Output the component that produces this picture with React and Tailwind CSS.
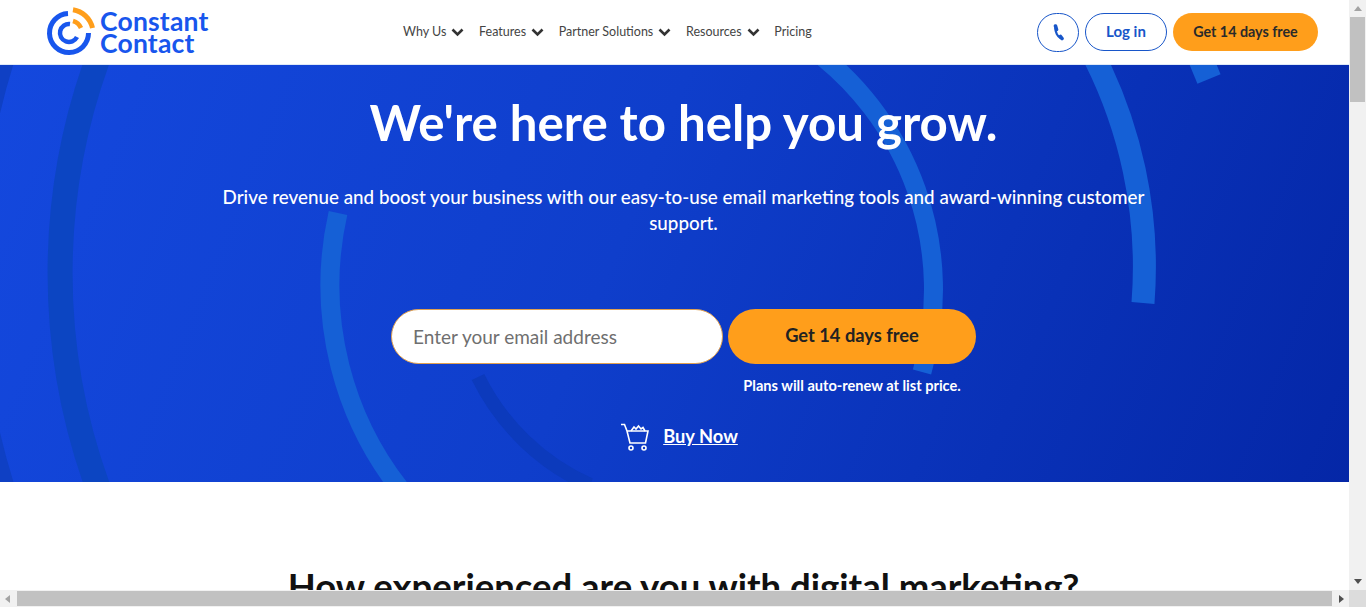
import React from 'react';

const FONT = "font-['Lato','Noto_Sans',sans-serif]";

const navItems = [
  { label: 'Why Us', caret: true },
  { label: 'Features', caret: true },
  { label: 'Partner Solutions', caret: true },
  { label: 'Resources', caret: true },
  { label: 'Pricing', caret: false },
];

// Arc between two points on a ring around the hero's centre
const Ring = ({ d, color, width }) => (
  <path d={d} fill="none" stroke={color} strokeWidth={width} />
);

const HeroRings = () => (
  <svg className="absolute inset-0 h-full w-full" viewBox="0 0 1367 417" fill="none">
    <Ring d="M 103 -20 A 627 627 0 0 0 103 436" color="#0c45c2" width="25" />
    <Ring d="M 7 -20 A 717 717 0 0 0 7 436" color="#0f40c4" width="24" />
    <Ring d="M 338 148 A 330 330 0 0 0 411 437" color="#1560d6" width="19" />
    <Ring d="M 807 -20 A 300 300 0 0 1 922 307" color="#1560d6" width="19" />
    <Ring d="M 1088 -20 A 465 465 0 0 1 1143 238" color="#1560d6" width="23" />
    <Ring d="M 1197 -15 L 1209 14" color="#1560d6" width="25" />
    <Ring d="M 478 312 A 228 228 0 0 0 590 420" color="#0c3abc" width="14" />
  </svg>
);

const Logo = () => (
  <div className="flex items-center">
    <svg width="48" height="48" viewBox="0 0 48 48" fill="none" className="mt-[2px] shrink-0 overflow-visible">
      <path d="M21 4.500 A19.500 19.500 0 1 0 41.500 24" stroke="#1856ed" strokeWidth="5" />
      <path d="M23 15 A9 9 0 1 0 30 28" stroke="#1856ed" strokeWidth="4.500" />
      <path d="M26 .7 A24 24 0 0 1 45.500 19" stroke="#ff9e1b" strokeWidth="5" />
      <path d="M26 12 A12.500 12.500 0 0 1 34 19" stroke="#ff9e1b" strokeWidth="4.500" />
    </svg>
    <div className="ml-[5px] w-[115px] text-[26.5px] leading-[22px] font-bold tracking-[0.2px] text-[#1856ed]">
      <div>Constant</div>
      <div>Contact</div>
    </div>
  </div>
);

const Caret = () => (
  <svg width="13" height="9" viewBox="0 0 13 9" fill="none" stroke="#333" strokeWidth="2.600" className="ml-[5px]">
    <path d="M1.500 1.500 6.500 6.500 11.500 1.500" />
  </svg>
);

const CartIcon = () => (
  <svg width="28" height="28" viewBox="0 0 28 28" fill="none" stroke="#fff" strokeWidth="1.600">
    <path d="M0 1.500h3.500l2.500 6.500 3 12h15.500l2.500-12H6" />
    <circle cx="10" cy="25" r="2" />
    <circle cx="23" cy="25" r="2" />
    <path d="M10 8l3-4 2 2 2.500-3 2.500 3 2-1.500 2 3.500" />
  </svg>
);

const PhoneIcon = () => (
  <svg width="11" height="17" viewBox="0 0 11 17" fill="none" stroke="#1856c9">
    <path d="M2.500 2 3.500 5.500M7.500 12.500 9 14.500" strokeWidth="3.600" strokeLinecap="round" />
    <path d="M2.500 4C2.300 8 4.500 12.500 8 14.500" strokeWidth="2.400" />
  </svg>
);

export default function App() {
  return (
    <div className={`flex h-screen w-screen flex-col overflow-hidden bg-white ${FONT}`}>
      <div className="flex min-h-0 flex-1">
        <div className="min-w-0 flex-1 overflow-hidden">
          <div className="w-[1367px]">
            {/* Header */}
            <header className="flex h-[65px] items-center border-b border-[#dfe9f7] bg-white pr-[49px] pl-[47px]">
              <Logo />
              <nav className="ml-[188px] flex items-center text-[12.5px] text-[#444]">
                {navItems.map((item) => (
                  <span key={item.label} className="mr-[14.7px] flex items-center">
                    {item.label}
                    {item.caret && <Caret />}
                  </span>
                ))}
              </nav>
              <div className="ml-auto flex items-center gap-[6px]">
                <button className="flex h-[39px] w-[42px] items-center justify-center rounded-full border border-[#1856c9]">
                  <PhoneIcon />
                </button>
                <button className="h-[38px] w-[82px] rounded-full border border-[#1856c9] pb-[1px] text-[15px] font-bold text-[#1856c9]">
                  Log in
                </button>
                <button className="h-[38px] w-[145px] rounded-full bg-[#ff9e1b] pb-[1px] text-[14.3px] font-bold text-[#2a2a2a]">
                  Get 14 days free
                </button>
              </div>
            </header>

            {/* Hero */}
            <section className="relative h-[417px] overflow-hidden bg-[linear-gradient(112deg,#1448de_0%,#0f3ecb_45%,#0426a6_100%)] text-white">
              <HeroRings />
              <div className="relative flex flex-col items-center">
                <h1 className="mt-[27px] text-[49.200px] leading-[60px] font-bold">We're here to help you grow.</h1>
                <p className="mt-[32px] w-[940px] text-center text-[18.800px] leading-[26px] font-medium">
                  Drive revenue and boost your business with our easy-to-use email marketing tools and award-winning customer support.
                </p>
                <form className="mt-[73px] flex w-[585px] gap-[5px]">
                  <input
                    placeholder="Enter your email address"
                    className="h-[55px] w-[332px] rounded-full border border-[#e0a050] bg-white px-[21px] text-[19px] text-[#333] outline-none placeholder:text-[#6f6f6f]"
                  />
                  <button type="button" className="h-[55px] w-[248px] rounded-full bg-[#ff9e1b] pb-[1px] text-[18.300px] font-bold text-[#222]">
                    Get 14 days free
                  </button>
                </form>
                <div className="mt-[13px] w-[585px] pl-[337px] text-center text-[14.600px] leading-[18px] font-bold">
                  Plans will auto-renew at list price.
                </div>
                <a className="mt-[28px] mr-[8px] flex items-center gap-[14px] text-[18.300px] font-bold underline">
                  <CartIcon />
                  Buy Now
                </a>
              </div>
            </section>

            {/* Next section, cut off by the fold */}
            <section className="pt-[83px] text-center">
              <h2 className="text-[36.500px] leading-[42px] font-bold text-[#111]">How experienced are you with digital marketing?</h2>
            </section>
          </div>
        </div>

        {/* Vertical scrollbar */}
        <div className="flex w-[17px] shrink-0 flex-col items-center bg-[#f1f1f1]">
          <div className="mt-[6px] h-0 w-0 border-x-[4px] border-b-[5px] border-x-transparent border-b-[#a3a3a3]" />
          <div className="mt-[6px] h-[85px] w-[15px] bg-[#c1c1c1]" />
          <div className="mt-auto mb-[6px] h-0 w-0 border-x-[4px] border-t-[5px] border-x-transparent border-t-[#505050]" />
        </div>
      </div>

      {/* Horizontal scrollbar */}
      <div className="flex h-[17px] shrink-0 items-center bg-[#f1f1f1]">
        <div className="ml-[5px] h-0 w-0 border-y-[4px] border-r-[5px] border-y-transparent border-r-[#a3a3a3]" />
        <div className="ml-[7px] h-[15px] w-[1315px] bg-[#c1c1c1]" />
        <div className="ml-[7px] h-0 w-0 border-y-[4px] border-l-[5px] border-y-transparent border-l-[#505050]" />
        <div className="ml-auto h-full w-[17px] bg-[#dcdcdc]" />
      </div>
    </div>
  );
}
